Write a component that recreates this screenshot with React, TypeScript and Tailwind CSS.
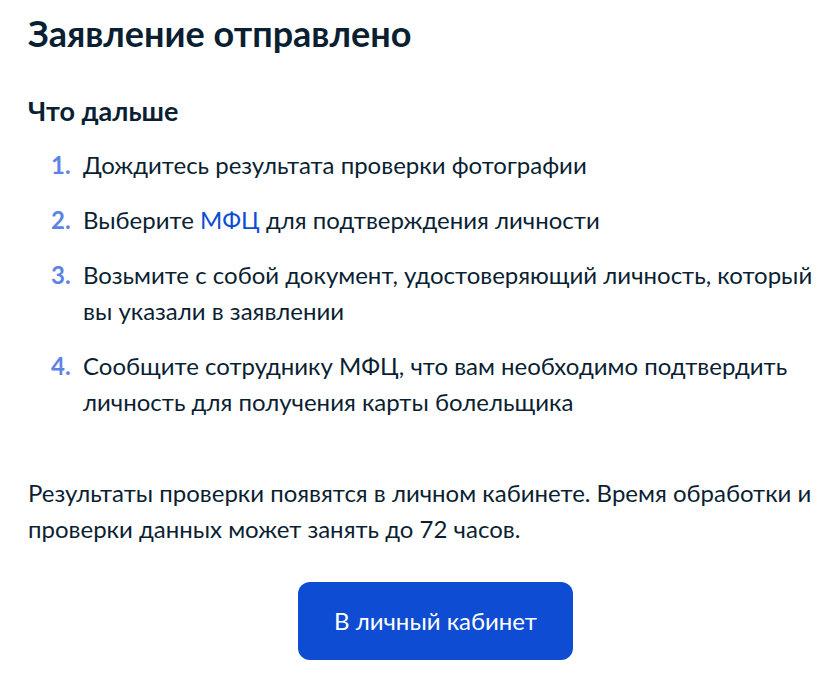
import React from 'react';

const steps: React.ReactNode[] = [
  'Дождитесь результата проверки фотографии',
  <>
    Выберите <a href="#" className="text-[#0d4cd3]">МФЦ</a> для подтверждения личности
  </>,
  'Возьмите с собой документ, удостоверяющий личность, который вы указали в заявлении',
  'Сообщите сотруднику МФЦ, что вам необходимо подтвердить личность для получения карты болельщика',
];

const App: React.FC = () => {
  return (
    <div className="min-h-screen w-full overflow-hidden bg-white text-[#0b1f33] font-['Lato','Noto_Sans',sans-serif]">
      <div className="w-[843px] pl-[28px] pt-[9px]">
        <h1 className="text-[36px] leading-[48px] font-bold">Заявление отправлено</h1>

        <h2 className="mt-[36px] text-[27px] leading-[36px] font-bold">Что дальше</h2>

        <ol className="mt-[18px] flex flex-col gap-[19px] pl-[23px]">
          {steps.map((step, i) => (
            <li key={i} className="flex text-[24px] leading-[36px]">
              <span className="w-[32px] shrink-0 font-bold text-[#5b84e4]">{i + 1}.</span>
              <span>{step}</span>
            </li>
          ))}
        </ol>

        <p className="mt-[55px] text-[24px] leading-[36px]">
          Результаты проверки появятся в личном кабинете. Время обработки и проверки данных может занять до 72 часов.
        </p>

        <div className="mt-[35px] flex justify-center">
          <button className="h-[78px] w-[275px] rounded-[12px] bg-[#0d4cd3] text-[24px] text-white">
            В личный кабинет
          </button>
        </div>
      </div>
    </div>
  );
};

export default App;
